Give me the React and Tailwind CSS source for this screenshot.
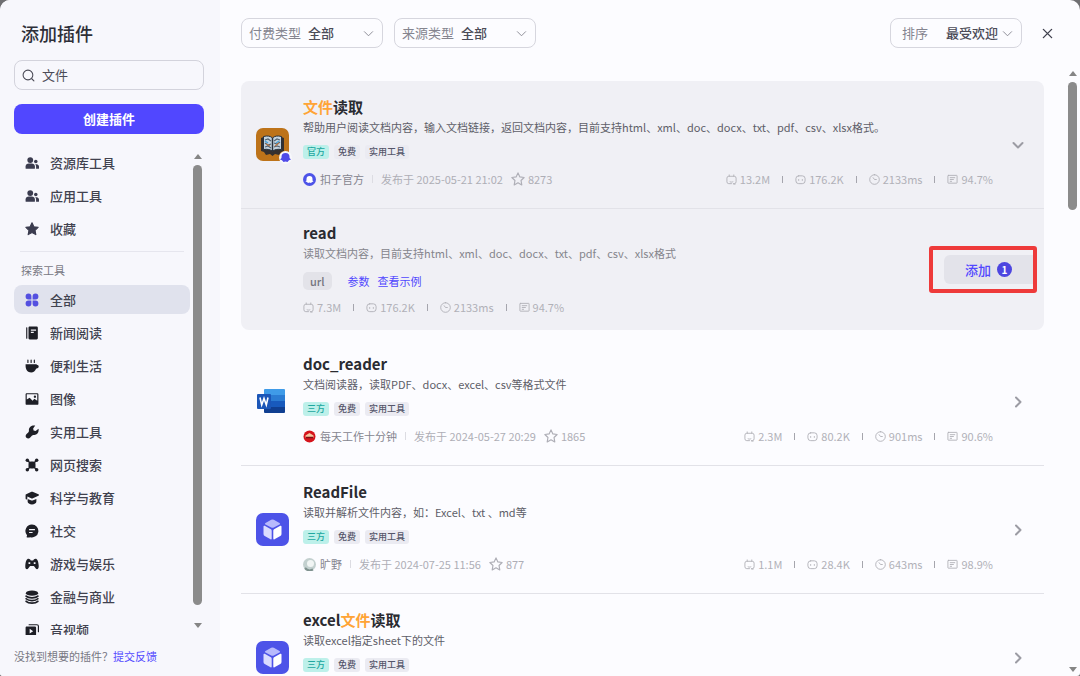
import React, { useState } from "react";

const Svg = ({ children, className = "size-3.5", ...rest }) => (
  <svg viewBox="0 0 24 24" fill="currentColor" aria-hidden="true" className={`shrink-0 ${className}`} {...rest}>
    {children}
  </svg>
);

const line = {
  fill: "none",
  stroke: "currentColor",
  strokeWidth: 2,
  strokeLinecap: "round",
  strokeLinejoin: "round",
};

const icons = {
  users: (
    <Svg>
      <circle cx="9" cy="7" r="5" />
      <path d="M1 21v-3c0-3 2.500-5 5.500-5h5c3 0 5.500 2 5.500 5v3c0 .6-.4 1-1 1H2c-.6 0-1-.4-1-1z" />
      <circle cx="18.500" cy="9.500" r="3" />
      <path d="M17.500 14h2.500c2.200 0 4 1.800 4 4v3c0 .6-.4 1-1 1h-4v-4c0-1.500-.5-2.900-1.500-4z" />
    </Svg>
  ),
  star: (
    <Svg>
      <path d="M12 1.500l3.200 6.700 7.300 1-5.300 5.100 1.300 7.300L12 18.100l-6.500 3.500 1.300-7.300L1.500 9.200l7.300-1z" stroke="currentColor" strokeWidth="2" strokeLinejoin="round" />
    </Svg>
  ),
  all: (
    <Svg>
      <path d="M6 1a5 5 0 015 5v5H6A5 5 0 016 1zM18 1a5 5 0 010 10h-5V6a5 5 0 015-5zM6 13h5v5a5 5 0 11-5-5zM13 13h5a5 5 0 11-5 5z" />
    </Svg>
  ),
  book: (
    <Svg>
      <path d="M2 3a1 1 0 012 0v18a1 1 0 01-2 0z" />
      <path fillRule="evenodd" d="M8 1h12a2 2 0 012 2v18a2 2 0 01-2 2H8a2 2 0 01-2-2V3c0-1.100.9-2 2-2zm2 5v2h9V6zm0 4v2h5v-2z" />
    </Svg>
  ),
  cup: (
    <Svg>
      <path d="M1 9h19v1c2 0 3.500 1.200 3.500 3S22 16.500 19 16.500C17.500 20.500 14.500 23 10.500 23 5 23 1 18.500 1 12z" />
      <path d="M5 2v4M10.500 2v4M16 2v4" {...line} />
    </Svg>
  ),
  image: (
    <Svg>
      <path fillRule="evenodd" d="M3 2h18a2 2 0 012 2v16a2 2 0 01-2 2H3a2 2 0 01-2-2V4c0-1.100.9-2 2-2zm0 2v9l5-3 5 5 3-3.500 5 3.500V4zm14 2a2 2 0 110 4 2 2 0 010-4z" />
    </Svg>
  ),
  wrench: (
    <Svg>
      <path d="M17.500 1L14 6l.7 3.500 3.500.7 5-3.700c1.200 6-2.400 11-7.900 10.500-1.700 0-2.600.4-3.600 1.600l-2.700 3c-1.800 1.900-4.700 2-6.600.3s-1.700-4.700.3-6.600l2.800-2.500c1-.9 1.300-1.900 1.200-3.600C6.300 3.500 11.700-.3 17.500 1z" />
    </Svg>
  ),
  network: (
    <Svg>
      <rect x="6" y="6" width="12" height="12" rx="4" />
      <path d="M4 4l16 16M20 4L4 20" stroke="currentColor" strokeWidth="2.500" />
      <circle cx="4" cy="4" r="3" /><circle cx="20" cy="4" r="3" />
      <circle cx="4" cy="20" r="3" /><circle cx="20" cy="20" r="3" />
    </Svg>
  ),
  school: (
    <Svg>
      <path d="M11 1.300a3 3 0 012 0l10 4.200c1.200.6 1.200 2.200 0 2.800l-9.500 4.200a3 3 0 01-3 0L4 9.500V13a1.500 1.500 0 01-3 0V7c0-.8.300-1.300 1-1.600z" />
      <path d="M4.500 13.500l5.500 2.300c1.300.6 2.700.6 4 0l5.500-2.300V18c0 3-3.500 5-7.500 5s-7.500-2-7.500-5z" />
    </Svg>
  ),
  chat: (
    <Svg>
      <path fillRule="evenodd" d="M12 1a11 11 0 11-3 21.600c-1.500.4-3.300.6-5.500.4-.8-.1-1-.8-.6-1.400.6-1 .7-1.900.3-2.700A11 11 0 0112 1zM7 8.500v2h10v-2zm0 5v2h6v-2z" />
    </Svg>
  ),
  game: (
    <Svg>
      <path fillRule="evenodd" d="M6 3c2 0 3 1.500 4 3h4c1-1.500 2-3 4-3 3 0 5 4.500 5.500 12 .3 4-1 6-3 6-2.500 0-3.500-4.500-5.500-5.500H9C7 16.500 6 21 3.500 21s-3.300-2-3-6C1 7.500 3 3 6 3zm0 6v3h3V9zm9 0v3h3V9z" />
    </Svg>
  ),
  coins: (
    <Svg>
      <ellipse cx="12" cy="5.500" rx="10.500" ry="4.500" />
      <path d="M2 10.500c2 2 5.700 3 10 3s8-1 10-3M2 15c2 2 5.700 3.200 10 3.200s8-1.200 10-3.200M2 19.300c2 2 5.700 3.200 10 3.200s8-1.200 10-3.200" {...line} strokeWidth="3" />
    </Svg>
  ),
  video: (
    <Svg>
      <path d="M7 3h13.500A2.500 2.500 0 0123 5.500V15" {...line} />
      <path fillRule="evenodd" d="M3 6h14a2 2 0 012 2v12a2 2 0 01-2 2H3a2 2 0 01-2-2V8c0-1.100.9-2 2-2zm5 4v8l6-4z" />
    </Svg>
  ),
};

const mine = [
  { icon: "users", label: "资源库工具" },
  { icon: "users", label: "应用工具" },
  { icon: "star", label: "收藏" },
];

const explore = [
  { icon: "all", label: "全部" },
  { icon: "book", label: "新闻阅读" },
  { icon: "cup", label: "便利生活" },
  { icon: "image", label: "图像" },
  { icon: "wrench", label: "实用工具" },
  { icon: "network", label: "网页搜索" },
  { icon: "school", label: "科学与教育" },
  { icon: "chat", label: "社交" },
  { icon: "game", label: "游戏与娱乐" },
  { icon: "coins", label: "金融与商业" },
  { icon: "video", label: "音视频" },
];

const BookLogo = () => (
  <span className="relative shrink-0">
    <svg viewBox="0 0 33 33" className="size-[33px]" aria-hidden="true">
      <rect width="33" height="33" rx="7" fill="#bd7319" />
      <path d="M5 10l5-2 6.500 2L23 8l5 2v13l-3 1-2 3-4-1-2.500 2-2.500-2-4 1-2-3-3-1z" fill="#34302f" />
      <path d="M7.500 8.500c4-1 7-.5 9 1.500 2-2 5-2.500 9-1.500v13c-4-.6-7 0-9 1.800-2-1.800-5-2.400-9-1.800z" fill="#c3d3df" stroke="#28313b" />
      <path d="M16.500 10v13" stroke="#28313b" strokeWidth="1.500" />
      <path d="M9 12l3-1 3 2m-6 2l3 2 3-1m-6 3l3-1 3 2m3-7l3-2 3 1m-6 3l3 1 3-2m-6 5l3-1 3 1" fill="none" stroke="#52616e" strokeWidth="1.200" />
      <path d="M9 13l3 2m8 0l3-2" stroke="#4aa5dc" strokeWidth="1.500" />
      <path d="M10 16l4 2m5 0l4-3" stroke="#bb7947" strokeWidth="1.200" />
    </svg>
    <svg viewBox="0 0 13 13" className="absolute -right-[3px] -bottom-[3px] size-[13px]" aria-hidden="true">
      <circle cx="6.500" cy="6.500" r="6.500" fill="#f7f7fc" />
      <path d="M2.500 6a4 4 0 018 0v1L12 8.500l-2 .8-1.500 1.700-2-.6-2 .6L3 9.300l-2-.8L2.500 7z" fill="#4f4ae8" />
    </svg>
  </span>
);

const WordLogo = () => (
  <svg viewBox="0 0 33 33" className="size-[33px] shrink-0" aria-hidden="true">
    <path d="M9 4h19a1 1 0 011 1v6H8V5a1 1 0 011-1z" fill="#3f9be8" />
    <path d="M8 10h21v6H8z" fill="#2b7cd3" />
    <path d="M8 16h21v6H8z" fill="#185abd" />
    <path d="M8 22h21v5a1 1 0 01-1 1H9a1 1 0 01-1-1z" fill="#103f91" />
    <rect x="1" y="9" width="14" height="15" rx="1" fill="#1b56b8" />
    <path d="M4 12.500l1.700 7.500L8 13.500l2.300 6.500 1.700-7.500" fill="none" stroke="#fff" strokeWidth="1.600" />
  </svg>
);

const CubeLogo = () => (
  <svg viewBox="0 0 33 33" className="size-[33px] shrink-0" aria-hidden="true">
    <rect width="33" height="33" rx="7" fill="#4d53e8" />
    <path d="M9.500 10l5.700-3.200a3 3 0 012.600 0L23.500 10c.8.5.8 1 0 1.500l-5.700 3a3 3 0 01-2.600 0l-5.700-3c-.8-.5-.8-1 0-1.500z" fill="#b8bafc" />
    <path d="M7.500 13.500c0-.8.600-1 1.200-.7l6.200 3.500c.5.300.8.700.8 1.400v7.800c0 .8-.5 1.100-1.200.7l-5.800-3.300c-.8-.4-1.200-1-1.200-1.900z" fill="#dbdcff" />
    <path d="M25.500 13.500c0-.8-.6-1-1.200-.7l-6.200 3.500c-.5.300-.8.700-.8 1.400v7.800c0 .8.500 1.100 1.200.7l5.800-3.300c.8-.4 1.200-1 1.200-1.900z" fill="#fff" />
  </svg>
);

const avatars = {
  coze: (
    <>
      <circle cx="6.500" cy="6.500" r="6.500" fill="#4d53e8" />
      <path d="M3.500 6a3 3 0 016 0v1.500l1 1-1.500.5-1 1-1.500-.4L5 10 4 9l-1.500-.5 1-1z" fill="#fff" />
    </>
  ),
  daily: (
    <>
      <circle cx="6.500" cy="6.500" r="6" fill="#d5141c" />
      <path d="M2.500 5.500L6.500 3l4 2.500v2h-8z" fill="#f6c7a0" />
      <path d="M3 7.500h7" stroke="#7d1015" strokeWidth="1.500" />
    </>
  ),
  wild: (
    <>
      <circle cx="6.500" cy="6.500" r="6.500" fill="#c3d0cf" />
      <path d="M2 10a6.500 6.500 0 008 1.500" fill="none" stroke="#7f928f" strokeWidth="2" />
      <circle cx="7.500" cy="5.500" r="3.500" fill="#f1f5f4" />
    </>
  ),
};

const plugins = [
  {
    title: ["", "文件", "读取"],
    desc: "帮助用户阅读文档内容，输入文档链接，返回文档内容，目前支持html、xml、doc、docx、txt、pdf、csv、xlsx格式。",
    badge: "官方",
    logo: <BookLogo />,
    avatar: "coze",
    author: "扣子官方",
    date: "2025-05-21 21:02",
    stars: "8273",
    stats: ["13.2M", "176.2K", "2133ms", "94.7%"],
    open: true,
  },
  {
    title: ["doc_reader", "", ""],
    desc: "文档阅读器，读取PDF、docx、excel、csv等格式文件",
    badge: "三方",
    logo: <WordLogo />,
    avatar: "daily",
    author: "每天工作十分钟",
    date: "2024-05-27 20:29",
    stars: "1865",
    stats: ["2.3M", "80.2K", "901ms", "90.6%"],
  },
  {
    title: ["ReadFile", "", ""],
    desc: "读取并解析文件内容，如：Excel、txt 、md等",
    badge: "三方",
    logo: <CubeLogo />,
    avatar: "wild",
    author: "旷野",
    date: "2024-07-25 11:56",
    stars: "877",
    stats: ["1.1M", "28.4K", "643ms", "98.9%"],
  },
  {
    title: ["excel", "文件", "读取"],
    desc: "读取excel指定sheet下的文件",
    badge: "三方",
    logo: <CubeLogo />,
  },
];

const statIcons = [
  <path key="calls" d="M7 2v3M17 2v3M20 22h-3M9 17c2 1 4 1 6 0M12 21H6a4 4 0 01-4-4V9a4 4 0 014-4h12a4 4 0 014 4v8a4 4 0 01-4 4h-2" />,
  <path key="bots" d="M8 4h8a6 6 0 016 6v5a6 6 0 01-6 6H8a6 6 0 01-6-6v-5a6 6 0 016-6zM8 12v2M16 12v2" />,
  <path key="time" d="M12 1.500a10.500 10.500 0 110 21 10.500 10.500 0 010-21zM9 8l3 4h4" />,
  <path key="rate" d="M3 3h18a1 1 0 011 1v15a1 1 0 01-1 1H3a1 1 0 01-1-1V4a1 1 0 011-1zM7 8h10M7 12h7M7 16h3" />,
];

const Chevron = ({ dir = "down", className, weight = 2 }) => (
  <Svg className={className} {...line} strokeWidth={weight}>
    {dir === "down" ? <path d="M3 8l9 9 9-9" /> : <path d="M8 3l9 9-9 9" />}
  </Svg>
);

const Stats = ({ items }) => (
  <div className="flex shrink-0 items-center gap-3 text-[#b1b1b8]">
    {items.map((value, i) => (
      <React.Fragment key={value}>
        {i > 0 && <span className="h-[7px] w-px bg-[#a5a5ad]" />}
        <span className="flex items-center gap-[3px]">
          <Svg className="size-[11px]" {...line}>{statIcons[i]}</Svg>
          {value}
        </span>
      </React.Fragment>
    ))}
  </div>
);

const Tag = ({ children, teal }) => (
  <span
    className={`rounded-[3px] px-1 text-[9px] leading-[14px] font-medium ${
      teal ? "bg-[#bdf0ea] text-[#20a79f]" : "bg-[#ebebf2] text-[#55566a]"
    }`}
  >
    {children}
  </span>
);

const PluginRow = ({ plugin, last }) => (
  <article className={`flex gap-3.5 pt-[15px] pr-5 pb-[19px] pl-[15px] ${last ? "" : "border-b border-[#e2e2e8]"}`}>
    <div className="flex items-center pt-1">{plugin.logo}</div>
    <div className="min-w-0 flex-1">
      <h2 className="text-[15px] leading-[22px] font-bold text-[#2a2b31]">
        {plugin.title[0]}
        <span className="text-[#ffa436]">{plugin.title[1]}</span>
        {plugin.title[2]}
      </h2>
      <p className="truncate text-[11px] leading-[18px] text-[#5e5e68]">{plugin.desc}</p>
      <div className="mt-[9px] flex gap-[5px]">
        <Tag teal>{plugin.badge}</Tag>
        <Tag>免费</Tag>
        <Tag>实用工具</Tag>
      </div>
      <div className="mt-2.5 flex h-5 items-center justify-between text-[11px]">
        {plugin.author && (
          <>
            <div className="flex items-center text-[#aeaeb6]">
              <svg viewBox="0 0 13 13" className="mr-1 size-[13px]" aria-hidden="true">{avatars[plugin.avatar]}</svg>
              <span className="text-[#85858f]">{plugin.author}</span>
              <span className="mx-2 h-2 w-px bg-[#dcdce2]" />
              <span>发布于 {plugin.date}</span>
              <Svg className="mr-[3px] ml-2 size-3.5" {...line}>
                <path d="M12 1.500l3.200 6.900 7.300 1-5.300 5.200 1.300 7.500L12 18.500l-6.500 3.600 1.300-7.500L1.500 9.400l7.300-1z" />
              </Svg>
              <span>{plugin.stars}</span>
            </div>
            <Stats items={plugin.stats} />
          </>
        )}
      </div>
    </div>
    <button type="button" aria-label="展开" className="ml-[5px] self-center pt-1 text-[#9c9ca4]">
      <Chevron dir={plugin.open ? "down" : "right"} className="size-3" weight={4} />
    </button>
  </article>
);

const ToolRow = () => (
  <article className="flex items-center justify-between pt-[13px] pr-[7px] pb-[13px] pl-[62px]">
    <div className="min-w-0">
      <h3 className="text-[15px] leading-[22px] font-bold text-[#2a2b31]">read</h3>
      <p className="text-[11px] leading-[18px] text-[#85858c]">
        读取文档内容，目前支持html、xml、doc、docx、txt、pdf、csv、xlsx格式
      </p>
      <div className="mt-2.5 flex items-center gap-2 text-[11px] leading-[18px]">
        <span className="mr-2 rounded-[5px] bg-[#e3e3e9] px-[7px] font-medium text-[#75757e]">url</span>
        <a href="#params" className="text-[#5147ff]">参数</a>
        <a href="#example" className="text-[#5147ff]">查看示例</a>
      </div>
      <div className="mt-[7px] flex h-5 items-center text-[11px]">
        <Stats items={["7.3M", "176.2K", "2133ms", "94.7%"]} />
      </div>
    </div>
    {/* Highlighted call to action */}
    <div className="shrink-0 rounded-[3px] border-4 border-[#ee3a3a] py-[5px] pl-[11px]">
      <button
        type="button"
        className="flex h-[29px] items-center gap-1.5 rounded-l-md bg-[#e3e3ea] px-[21px] text-[13px] font-medium text-[#5147ff]"
      >
        添加
        <span className="flex size-[15px] items-center justify-center rounded-full bg-[#4d46e0] text-[10px] font-bold text-white">
          1
        </span>
      </button>
    </div>
  </article>
);

const FilterSelect = ({ id, label, value, wide }) => (
  <div className={`flex h-[30px] items-center rounded-lg border border-[#d6d6de] pr-2 ${wide ? "w-[142px] pl-[7px]" : "pl-[11px]"}`}>
    <label htmlFor={id} className={`shrink-0 text-[13px] text-[#85858f] ${wide ? "mr-[7px]" : "mr-[18px]"}`}>{label}</label>
    <select id={id} className={`appearance-none bg-transparent text-[13px] font-medium text-[#4b4b57] outline-none ${wide ? "min-w-0 flex-1" : "mr-[3px]"}`}>
      <option>{value}</option>
    </select>
    <Chevron className="pointer-events-none size-[11px] text-[#85858f]" />
  </div>
);

const Arrow = ({ up }) => (
  <svg viewBox="0 0 8 5" className="h-[5px] w-2 shrink-0" fill="#858585" aria-hidden="true">
    <path d={up ? "M4 0l4 5H0z" : "M4 5L0 0h8z"} />
  </svg>
);

const NavItem = ({ item, active, dark, onClick }) => (
  <li>
    <button
      type="button"
      onClick={onClick}
      className={`flex h-[29px] w-full items-center gap-[11px] rounded-lg pl-[11px] text-[13px] font-medium text-[#41424f] ${active ? "bg-[#e0e2ed]" : ""}`}
    >
      <span className={active ? "text-[#5450e0]" : dark ? "text-[#1e1f26]" : "text-[#3b3c4f]"}>{icons[item.icon]}</span>
      {item.label}
    </button>
  </li>
);

const Sidebar = () => {
  const [query, setQuery] = useState("文件");
  const [active, setActive] = useState("全部");

  return (
    <aside className="flex w-[220px] shrink-0 flex-col bg-[#f7f7fc] pt-5 pl-3.5">
      <h1 className="pl-[7px] text-lg leading-[26px] font-medium text-[#2e2f38]">添加插件</h1>

      <div className="mt-3.5 mr-4 flex h-[30px] shrink-0 items-center gap-[7px] rounded-lg border border-[#d3d3dc] px-[7px]">
        <Svg className="size-[13px] text-[#4b4b57]" {...line}>
          <circle cx="11" cy="11" r="9" />
          <path d="M18 18l4 4" />
        </Svg>
        <input
          type="text"
          aria-label="搜索"
          value={query}
          onChange={(e) => setQuery(e.target.value)}
          className="min-w-0 flex-1 bg-transparent text-[13px] text-[#4b4b57] outline-none"
        />
      </div>

      <button type="button" className="mt-3.5 mr-4 h-[30px] shrink-0 rounded-lg bg-[#5147ff] text-[13px] font-bold text-white">
        创建插件
      </button>

      <div className="mt-3.5 flex min-h-0 flex-1">
        <nav className="w-44 overflow-hidden">
          <ul className="space-y-1">
            {mine.map((item) => (
              <NavItem key={item.label} item={item} active={active === item.label} onClick={() => setActive(item.label)} />
            ))}
          </ul>
          <hr className="mx-1.5 mt-2 border-[#e6e6ee]" />
          <p className="mt-[9px] mb-1.5 pl-[7px] text-[11px] leading-[18px] text-[#777783]">探索工具</p>
          <ul className="space-y-1">
            {explore.map((item) => (
              <NavItem key={item.label} item={item} dark active={active === item.label} onClick={() => setActive(item.label)} />
            ))}
          </ul>
        </nav>
        <div className="ml-[3px] flex w-[9px] flex-col items-center gap-1.5 pt-1.5 pb-[7px]">
          <Arrow up />
          <div className="min-h-0 w-[9px] flex-1 rounded-full bg-[#8b8b8b]" />
          <div className="h-1.5" />
          <Arrow />
        </div>
      </div>

      <p className="mt-3 mb-[11px] text-[11px] leading-[18px] text-[#777783]">
        没找到想要的插件？
        <a href="#feedback" className="text-[#5147ff]">提交反馈</a>
      </p>
    </aside>
  );
};

const App = () => {
  return (
    <div className="h-screen bg-[#6f6f72] font-['Noto_Sans_CJK_SC',sans-serif]">
      <div className="flex h-full overflow-hidden rounded-t-[10px] rounded-b-[3px] bg-[#fcfcff]">
        <Sidebar />

        <main className="flex min-w-0 flex-1 flex-col pl-[21px]">
          {/* Filters */}
          <header className="flex shrink-0 items-center gap-[11px] pt-[18px] pr-[27px]">
            <FilterSelect id="price" label="付费类型" value="全部" wide />
            <FilterSelect id="source" label="来源类型" value="全部" wide />
            <div className="ml-auto flex items-center gap-5">
              <FilterSelect id="sort" label="排序" value="最受欢迎" />
              <button type="button" aria-label="关闭" className="text-[#41424f]">
                <Svg className="size-[11px]" {...line} strokeWidth="3">
                  <path d="M3 3l18 18M21 3L3 21" />
                </Svg>
              </button>
            </div>
          </header>

          <div className="mt-[22px] flex min-h-0 flex-1">
            <div className="min-w-0 flex-1 overflow-hidden pt-[11px]">
              <section className="mb-2 rounded-lg bg-[#f0f0f5]">
                <PluginRow plugin={plugins[0]} />
                <ToolRow />
              </section>
              {plugins.slice(1).map((plugin, i) => (
                <PluginRow key={plugin.title.join("")} plugin={plugin} last={i === 2} />
              ))}
            </div>

            <div className="mr-[3px] ml-6 flex w-[9px] flex-col items-center justify-between pt-px pb-1">
              <div className="flex flex-col items-center gap-1.5">
                <Arrow up />
                <div className="h-32 w-[9px] rounded-full bg-[#8b8b8b]" />
              </div>
              <Arrow />
            </div>
          </div>
        </main>
      </div>
    </div>
  );
};

export default App;
